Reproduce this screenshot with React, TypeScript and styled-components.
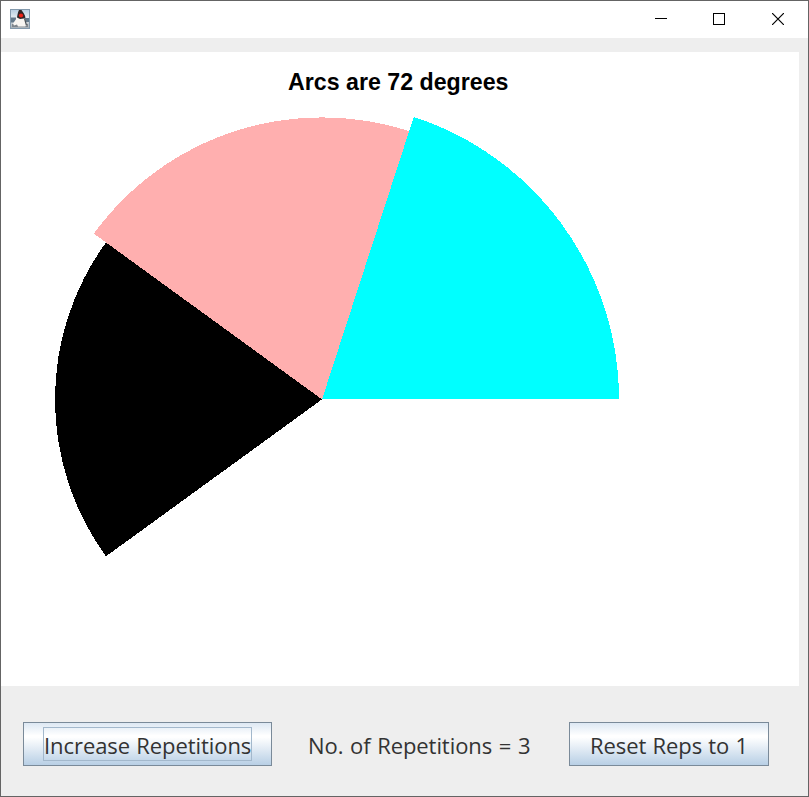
import React from "react";
import styled, { createGlobalStyle } from "styled-components";

const Global = createGlobalStyle`
  * { box-sizing: border-box; }
  body { margin: 0; background: #fff; overflow: hidden; }
`;

const Window = styled.main`
  width: 809px;
  height: 797px;
  border: 1px solid #646464;
  background: #eeeeee;
  display: flex;
  flex-direction: column;
`;

const TitleBar = styled.header`
  height: 37px;
  flex: none;
  background: #fff;
  display: flex;
  align-items: center;
  justify-content: space-between;
  padding-left: 9px;
`;

const AppIcon = styled.svg`
  width: 20px;
  height: 20px;
  margin-top: -1px;
`;

const WindowControls = styled.div`
  display: flex;
  height: 100%;
`;

const ControlButton = styled.button<{ $width: number }>`
  width: ${(p) => p.$width}px;
  height: 36px;
  padding: 0;
  border: 0;
  background: none;
  display: flex;
  align-items: center;
  justify-content: center;
  svg { width: 12px; height: 12px; }
`;

const Canvas = styled.section`
  width: 798px;
  height: 634px;
  flex: none;
  margin-top: 14px;
  background: #fff;
  display: grid;
`;

const Drawing = styled.svg`
  width: 798px;
  height: 634px;
  display: block;
  grid-area: 1 / 1;
`;

const Heading = styled.h1`
  grid-area: 1 / 1;
  justify-self: start;
  align-self: start;
  margin: 16px 0 0 287px;
  font: bold 23.2px/28px "Liberation Sans", Arial, sans-serif;
  color: #000;
  white-space: nowrap;
`;

const Controls = styled.footer`
  height: 109px;
  display: flex;
  align-items: center;
  padding: 6px 0 0 22px;
  font: 22px/30px "Open Sans", "Segoe UI", sans-serif;
  letter-spacing: -0.07px;
  color: #333;
`;

const SwingButton = styled.button<{ $width: number }>`
  width: ${(p) => p.$width}px;
  height: 44px;
  padding: 0;
  border: 1px solid #7a8a99;
  border-radius: 0;
  background: linear-gradient(#dde8f3 0%, #ffffff 30%, #ffffff 34%, #b8cfe5 100%);
  font: inherit;
  letter-spacing: inherit;
  word-spacing: 0.6px;
  color: inherit;
  display: flex;
  align-items: center;
  justify-content: center;
`;

const ButtonLabel = styled.span<{ $focused?: boolean }>`
  height: 34px;
  border: 1px solid ${(p) => (p.$focused ? "#a3b8cc" : "transparent")};
  width: 209px;
  padding-top: 2px;
  line-height: 30px;
  white-space: nowrap;
  text-align: center;
`;

const Status = styled.span`
  width: 297px;
  padding: 2px 0 0 36px;
  white-space: nowrap;
  word-spacing: 1px;
`;

const CENTER = { x: 321, y: 347.4 };
const SWEEP = 72;
const ARCS = [
  { radius: 297, color: "#00ffff" },
  { radius: 282, color: "#ffafaf" },
  { radius: 267, color: "#000000" },
];

function sector(radius: number, index: number) {
  const at = (deg: number) => {
    const a = (deg * Math.PI) / 180;
    return `${CENTER.x + radius * Math.cos(a)} ${CENTER.y - radius * Math.sin(a)}`;
  };
  return `M${CENTER.x} ${CENTER.y}L${at(index * SWEEP)}A${radius} ${radius} 0 0 0 ${at((index + 1) * SWEEP)}Z`;
}

export default function App() {
  return (
    <>
      <Global />
      <Window>
        <TitleBar>
          <AppIcon viewBox="0 0 20 20">
            <defs>
              <linearGradient id="sky" x2="0" y2="1">
                <stop stopColor="#b5cde0" />
                <stop offset=".45" stopColor="#e5edf2" />
                <stop offset="1" stopColor="#a4acb3" />
              </linearGradient>
              <filter id="soft"><feGaussianBlur stdDeviation=".45" /></filter>
            </defs>
            <rect x=".5" y=".5" width="19" height="19" fill="url(#sky)" stroke="#8299ac" />
            <g filter="url(#soft)">
              <path d="M1 8.500h5v5H1zM15 9h4v4h-4z" fill="#64798a" />
              <path d="M2 15h16v3H2z" fill="#7d858c" />
              <path d="M7.500 8 3 14.500l1 2 3-1 1 2h7l2-1-2-7-1-2z" fill="#f7f5f2" />
              <path d="M15 8.500 17 16l-1 1-2-7z" fill="#4c5358" />
              <path d="M9 1C8 3 7.500 5 7 8.500l3 1.500 4-.5 1.500-1C15 5.500 13 3.500 11.500 1z" fill="#302728" />
              <circle cx="11" cy="6.500" r="2.100" fill="#f02018" />
            </g>
          </AppIcon>
          <WindowControls>
            <ControlButton $width={58} aria-label="Minimize">
              <svg viewBox="0 0 12 12"><path d="M0 5.500h12" stroke="#000" /></svg>
            </ControlButton>
            <ControlButton $width={58} aria-label="Maximize">
              <svg viewBox="0 0 12 12"><rect x=".5" y=".5" width="11" height="11" fill="none" stroke="#000" /></svg>
            </ControlButton>
            <ControlButton $width={60} aria-label="Close">
              <svg viewBox="0 0 12 12"><path d="M0 0l12 12M12 0 0 12" stroke="#000" strokeWidth="1.2" /></svg>
            </ControlButton>
          </WindowControls>
        </TitleBar>
        <Canvas>
          <Drawing shapeRendering="crispEdges">
            {ARCS.map((arc, i) => (
              <path key={arc.color} d={sector(arc.radius, i)} fill={arc.color} />
            ))}
          </Drawing>
          <Heading>Arcs are 72 degrees</Heading>
        </Canvas>
        <Controls>
          <SwingButton $width={249}>
            <ButtonLabel $focused>Increase Repetitions</ButtonLabel>
          </SwingButton>
          <Status>No. of Repetitions = 3</Status>
          <SwingButton $width={200}>
            <ButtonLabel>Reset Reps to 1</ButtonLabel>
          </SwingButton>
        </Controls>
      </Window>
    </>
  );
}
